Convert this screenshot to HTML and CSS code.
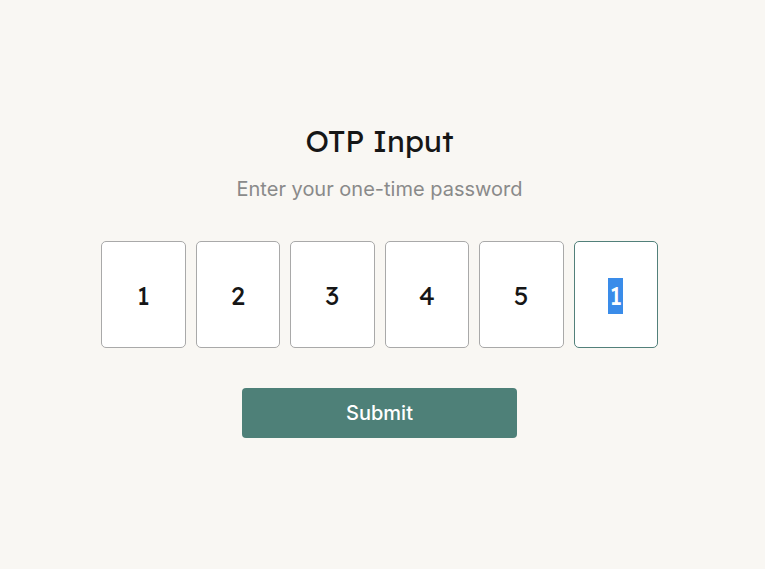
FILE: index.html
```html
<!DOCTYPE html>
<html lang="en">
<head>
  <meta charset="UTF-8">
  <meta name="viewport" content="width=device-width, initial-scale=1.0">
  <title>OTP Input</title>
  <link rel="stylesheet" href="styles.css">
</head>
<body>
  <div class="otp-card">
    <h1 class="titulo">OTP Input</h1>
    <p class="subtitulo">Enter your one-time password</p>

    <div class="otp-campos">
      <div class="campo">1</div>
      <div class="campo">2</div>
      <div class="campo">3</div>
      <div class="campo">4</div>
      <div class="campo">5</div>
      <div class="campo ativo"><span class="selecionado">1</span></div>
    </div>

    <button class="btn-enviar" type="button">Submit</button>
  </div>
</body>
</html>
```

FILE: styles.css
```css
body {
  margin: 0;
  padding: 0 6px 0 0;
  background-color: #f9f7f3;
  font-family: Inter, "Noto Sans", sans-serif;
  color: #161616;
  display: flex;
  justify-content: center;
}

.otp-card {
  display: flex;
  flex-direction: column;
  align-items: center;
  padding-top: 121px;
}

.titulo {
  font-family: "Lexend", "Noto Sans", Inter, sans-serif;
  font-size: 30px;
  font-weight: 400;
  margin: 0;
  line-height: 40px;
}

.subtitulo {
  margin: 15px 0 0;
  font-size: 20px;
  color: #8a8a8a;
  line-height: 26px;
}

.otp-campos {
  display: flex;
  gap: 10px;
  margin-top: 39px;
}

.campo {
  width: 82.5px;
  height: 103px;
  background-color: #fff;
  border: 1px solid #a9a9a9;
  border-radius: 5px;
  display: flex;
  align-items: center;
  justify-content: center;
  font-family: "Lexend", "Noto Sans", Inter, sans-serif;
  font-size: 26px;
  padding-top: 2px;
  box-sizing: content-box;
}

.campo.ativo {
  border-color: #52807a;
}

.selecionado {
  background-color: #3a8ce9;
  color: #fff;
  padding: 0 1px;
  line-height: 36px;
}

.btn-enviar {
  margin-top: 40px;
  width: 275px;
  height: 50px;
  border: none;
  border-radius: 4px;
  background-color: #4e8078;
  color: #fff;
  font-family: Inter, sans-serif;
  font-size: 20px;
  font-weight: 500;
  cursor: pointer;
}
```
